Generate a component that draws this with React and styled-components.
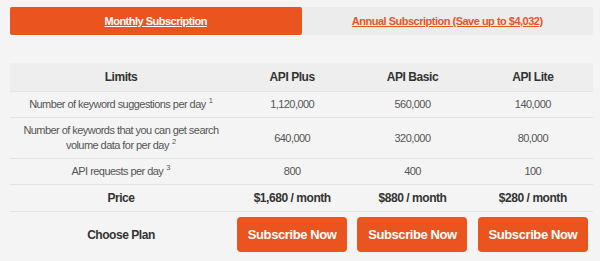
import React from "react";
import styled, { createGlobalStyle } from "styled-components";

const Global = createGlobalStyle`
  html, body { margin: 0; padding: 0; background: #f4f4f4; }
  body { font-family: "Liberation Sans", Arial, sans-serif; }
`;

const Page = styled.div`
  padding: 7px 7px 0 10px;
  width: 583px;
`;

const Tabs = styled.div`
  display: flex;
  height: 28px;
`;

const Tab = styled.a`
  flex: 1;
  display: flex;
  align-items: center;
  justify-content: center;
  border-radius: 2px;
  font-size: 11px;
  letter-spacing: -0.5px;
  font-weight: bold;
  text-decoration: underline;
  cursor: pointer;
  background: ${(p) => (p.$active ? "#e9541f" : "#ececec")};
  color: ${(p) => (p.$active ? "#ffffff" : "#e9541f")};
`;

const Table = styled.table`
  margin-top: 28px;
  width: 583px;
  border-collapse: collapse;
  table-layout: fixed;
`;

const HeadRow = styled.tr`
  background: #eeeeee;
`;

const Row = styled.tr`
  border-top: 1px solid #e3e3e3;
`;

const Th = styled.th`
  padding: 6px 8px;
  font-size: 12px;
  letter-spacing: -0.45px;
  line-height: 16px;
  font-weight: bold;
  color: #333;
  text-align: center;
`;

const Td = styled.td`
  padding: 5px 8px;
  font-size: 11px;
  letter-spacing: -0.55px;
  line-height: 15px;
  color: #555;
  text-align: center;
  vertical-align: middle;
  ${(p) =>
    p.$bold &&
    "font-weight: bold; color: #333; font-size: 12px; letter-spacing: -0.45px; line-height: 16px;"}
`;

const BtnCell = styled.td`
  padding: 5px 5px 6px;
  text-align: center;
`;

const Sup = styled.sup`
  font-size: 7.5px;
  letter-spacing: 0;
  line-height: 0;
  vertical-align: 5px;
  margin-left: 3px;
`;

const Button = styled.button`
  width: 110px;
  height: 35px;
  border: none;
  border-radius: 4px;
  background: #e9541f;
  color: #fff;
  font-family: inherit;
  font-weight: bold;
  font-size: 13px;
  letter-spacing: -0.4px;
  cursor: pointer;
  display: block;
  margin: 0 auto;
  padding: 0;
`;

const plans = [
  { name: "API Plus", sugg: "1,120,000", kw: "640,000", req: "800", price: "$1,680 / month" },
  { name: "API Basic", sugg: "560,000", kw: "320,000", req: "400", price: "$880 / month" },
  { name: "API Lite", sugg: "140,000", kw: "80,000", req: "100", price: "$280 / month" },
];

export default function App() {
  return (
    <>
      <Global />
      <Page>
        <Tabs>
          <Tab $active>Monthly Subscription</Tab>
          <Tab>Annual Subscription (Save up to $4,032)</Tab>
        </Tabs>
        <Table>
          <colgroup>
            <col style={{ width: 222 }} />
            <col />
            <col />
            <col />
          </colgroup>
          <thead>
            <HeadRow>
              <Th>Limits</Th>
              {plans.map((p) => (
                <Th key={p.name}>{p.name}</Th>
              ))}
            </HeadRow>
          </thead>
          <tbody>
            <Row>
              <Td>
                Number of keyword suggestions per day<Sup>1</Sup>
              </Td>
              {plans.map((p) => (
                <Td key={p.name}>{p.sugg}</Td>
              ))}
            </Row>
            <Row>
              <Td>
                Number of keywords that you can get search volume data for per day<Sup>2</Sup>
              </Td>
              {plans.map((p) => (
                <Td key={p.name}>{p.kw}</Td>
              ))}
            </Row>
            <Row>
              <Td>
                API requests per day<Sup>3</Sup>
              </Td>
              {plans.map((p) => (
                <Td key={p.name}>{p.req}</Td>
              ))}
            </Row>
            <Row>
              <Td $bold>Price</Td>
              {plans.map((p) => (
                <Td $bold key={p.name}>{p.price}</Td>
              ))}
            </Row>
            <Row>
              <Td $bold>Choose Plan</Td>
              {plans.map((p) => (
                <BtnCell key={p.name}>
                  <Button>Subscribe Now</Button>
                </BtnCell>
              ))}
            </Row>
          </tbody>
        </Table>
      </Page>
    </>
  );
}
